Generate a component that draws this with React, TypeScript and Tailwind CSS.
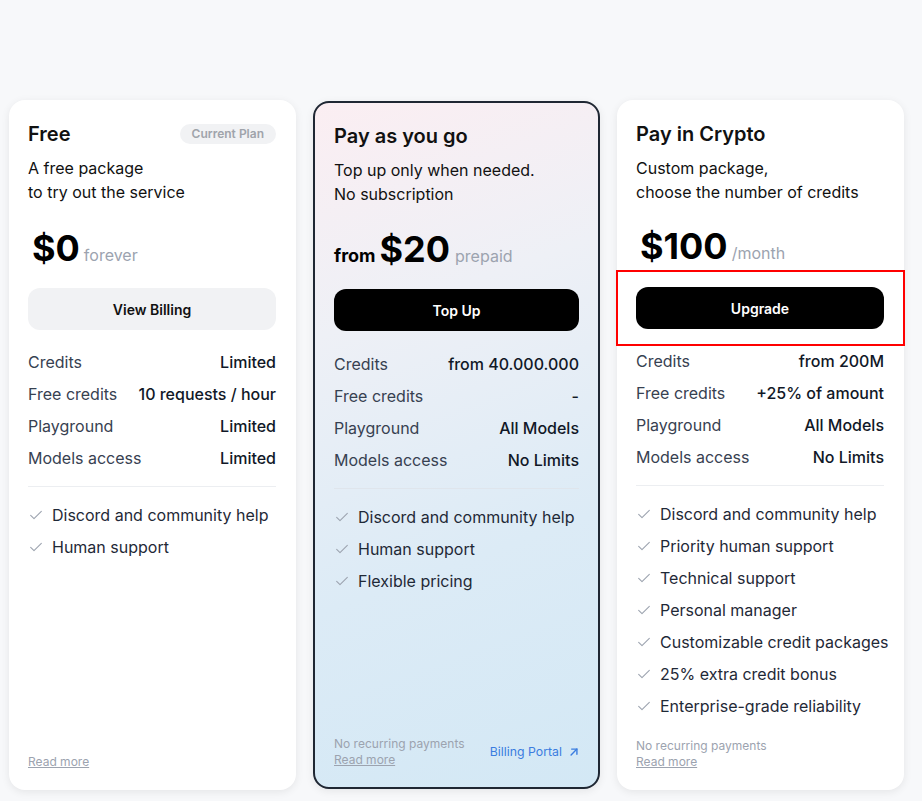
import React from "react";

const Check = () => (
  <svg width="16" height="16" viewBox="0 0 24 24" fill="none" stroke="#9ca3af" strokeWidth="1.6" strokeLinecap="round" strokeLinejoin="round" className="shrink-0">
    <path d="M4 12.5l5 5L20 6.5" />
  </svg>
);

const Arrow = () => (
  <svg width="14" height="14" viewBox="0 0 24 24" fill="none" stroke="currentColor" strokeWidth="2.4" strokeLinecap="round" strokeLinejoin="round">
    <path d="M7 17L17 7" />
    <path d="M8 7h9v9" />
  </svg>
);

type Row = [string, string];

function Table({ rows }: { rows: Row[] }) {
  return (
    <div className="flex flex-col">
      {rows.map(([k, v]) => (
        <div key={k} className="flex justify-between items-center h-8 text-[16px]">
          <span className="text-[#374151]">{k}</span>
          <span className="font-medium text-[#111827]">{v}</span>
        </div>
      ))}
    </div>
  );
}

function Features({ items }: { items: string[] }) {
  return (
    <div className="flex flex-col">
      {items.map((f) => (
        <div key={f} className="flex items-center gap-2 h-8 text-[16px] text-[#1f2937] whitespace-nowrap">
          <Check />
          <span>{f}</span>
        </div>
      ))}
    </div>
  );
}

export default function App() {
  return (
    <div className="min-h-[801px] bg-[#f7f8fa] pt-[100px] px-[9px] pr-[18px] pb-[11px]" style={{ fontFamily: "Inter, 'Noto Sans', sans-serif" }}>
      <div className="grid grid-cols-3 gap-[17px] items-stretch h-[690px]">
        {/* Free */}
        <div className="bg-white rounded-2xl shadow-[0_2px_8px_rgba(0,0,0,0.08)] pl-[19px] pr-5 pt-5 pb-[19px] flex flex-col">
          <div className="flex items-center justify-between h-7">
            <span className="text-[20px] font-semibold text-[#111]">Free</span>
            <span className="bg-[#f1f2f4] text-[#a0a4ab] text-[12px] font-semibold rounded-full px-3 py-[1px]">Current Plan</span>
          </div>
          <div className="mt-[8px] text-[16px] leading-6 text-[#111]">
            A free package<br />to try out the service
          </div>
          <div className="mt-[26px] flex items-baseline gap-1 h-10 pl-1">
            <span className="text-[36px] font-bold text-black leading-none">$0</span>
            <span className="text-[16px] text-[#9ca3af]">forever</span>
          </div>
          <button className="mt-[18px] h-[42px] w-full rounded-xl bg-[#f1f2f4] text-[14px] font-semibold text-[#111]">View Billing</button>
          <div className="mt-4">
            <Table rows={[["Credits", "Limited"], ["Free credits", "10 requests / hour"], ["Playground", "Limited"], ["Models access", "Limited"]]} />
          </div>
          <div className="border-t border-[#eceef1] mt-[12px] mb-[12px]" />
          <Features items={["Discord and community help", "Human support"]} />
          <div className="mt-auto text-[12px] text-[#9ca3af]">
            <a className="underline">Read more</a>
          </div>
        </div>

        {/* Pay as you go */}
        <div className="rounded-2xl border-2 border-[#1f2733] shadow-[0_2px_8px_rgba(0,0,0,0.08)] px-[19px] pt-[19px] pb-[19px] flex flex-col mt-[1px] mb-[1px] bg-[linear-gradient(160deg,#fbeef2_0%,#eef0f6_30%,#dcebf6_65%,#d3e8f5_100%)]">
          <div className="flex items-center h-7">
            <span className="text-[20px] font-semibold text-[#111]">Pay as you go</span>
          </div>
          <div className="mt-[8px] text-[16px] leading-6 text-[#111]">
            Top up only when needed.<br />No subscription
          </div>
          <div className="mt-[25px] flex items-baseline h-10">
            <span className="text-[18px] font-bold text-black mr-1">from</span>
            <span className="text-[36px] font-bold text-black leading-none">$20</span>
            <span className="text-[16px] text-[#9ca3af] ml-[5px]">prepaid</span>
          </div>
          <button className="mt-[18px] h-[42px] w-full rounded-xl bg-black text-[14px] font-semibold text-white">Top Up</button>
          <div className="mt-[17px]">
            <Table rows={[["Credits", "from 40.000.000"], ["Free credits", "-"], ["Playground", "All Models"], ["Models access", "No Limits"]]} />
          </div>
          <div className="border-t border-[#dfe5ec] mt-[12px] mb-[12px]" />
          <Features items={["Discord and community help", "Human support", "Flexible pricing"]} />
          <div className="mt-auto flex items-center justify-between text-[12px]">
            <div className="flex flex-col text-[#9ca3af] leading-4">
              <span>No recurring payments</span>
              <a className="underline">Read more</a>
            </div>
            <a className="flex items-center gap-[5px] text-[#3b7de0] text-[12.3px] mr-[-2px]">Billing Portal <Arrow /></a>
          </div>
        </div>

        {/* Pay in Crypto */}
        <div className="bg-white rounded-2xl shadow-[0_2px_8px_rgba(0,0,0,0.08)] pl-[19px] pr-5 pt-5 pb-5 flex flex-col">
          <div className="flex items-center h-7">
            <span className="text-[20px] font-semibold text-[#111]">Pay in Crypto</span>
          </div>
          <div className="mt-[8px] text-[16px] leading-6 text-[#111]">
            Custom package,<br />choose the number of credits
          </div>
          <div className="mt-[24px] flex items-baseline gap-1 h-10 pl-1">
            <span className="text-[36px] font-bold text-black leading-none">$100</span>
            <span className="text-[16px] text-[#9ca3af]">/month</span>
          </div>
          <div className="relative mt-[19px]">
            <button className="h-[42px] w-full rounded-xl bg-black text-[14px] font-semibold text-white">Upgrade</button>
            <div className="absolute left-[-20px] right-[-21px] top-[-17px] bottom-[-17px] border-2 border-[#ff0000] pointer-events-none" />
          </div>
          <div className="mt-4">
            <Table rows={[["Credits", "from 200M"], ["Free credits", "+25% of amount"], ["Playground", "All Models"], ["Models access", "No Limits"]]} />
          </div>
          <div className="border-t border-[#eceef1] mt-[12px] mb-[12px]" />
          <Features items={["Discord and community help", "Priority human support", "Technical support", "Personal manager", "Customizable credit packages", "25% extra credit bonus", "Enterprise-grade reliability"]} />
          <div className="mt-auto flex flex-col text-[12px] text-[#9ca3af] leading-4">
            <span>No recurring payments</span>
            <a className="underline">Read more</a>
          </div>
        </div>
      </div>
    </div>
  );
}
